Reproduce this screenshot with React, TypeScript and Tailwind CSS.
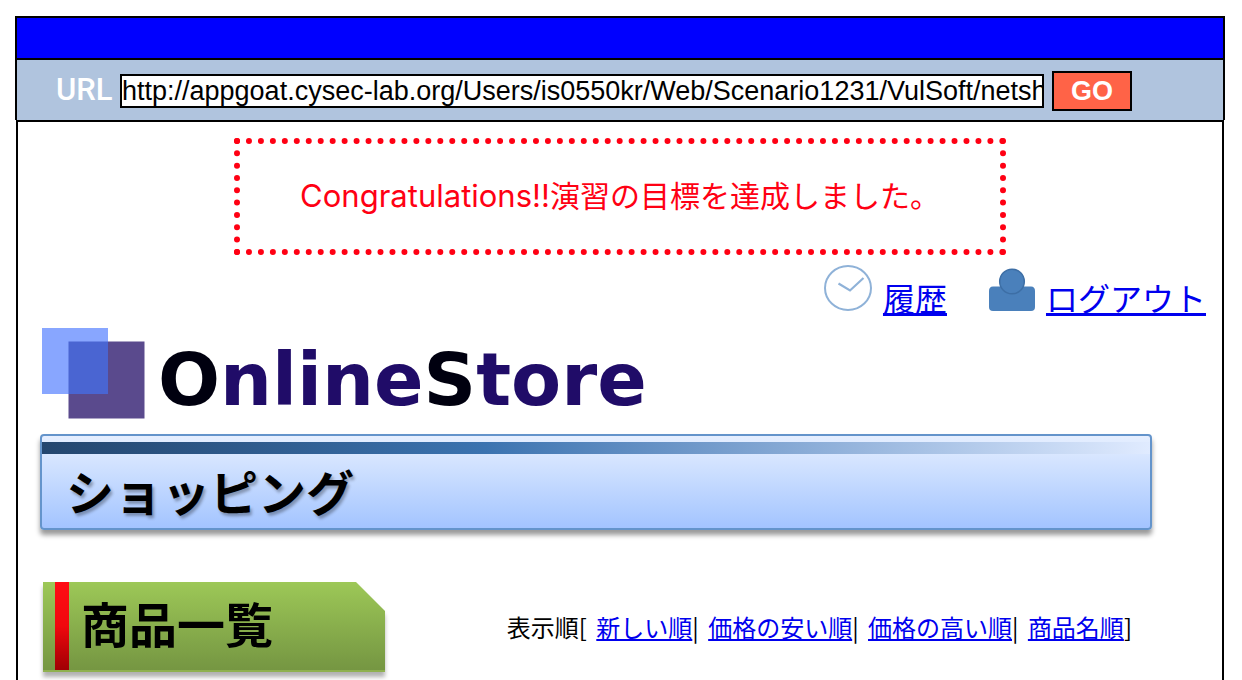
const sortOptions = ["新しい順", "価格の安い順", "価格の高い順", "商品名順"];

function ClockIcon() {
  return (
    <svg viewBox="0 0 48 46" className="h-[46px] w-12" fill="none" aria-hidden="true">
      <ellipse cx="24" cy="23" rx="23" ry="22" stroke="#8fb2d8" strokeWidth="2" />
      <path d="M14.5 18.5 26 25.5 39.5 13" stroke="#8fb2d8" strokeWidth="2.2" />
    </svg>
  );
}

function UserIcon() {
  return (
    <svg viewBox="0 0 46 43" className="h-[43px] w-[46px]" aria-hidden="true">
      <path d="M4 18.500H42Q46 18.500 46 23V39Q46 43 42 43H4Q0 43 0 39V23Q0 18.500 4 18.500Z" fill="#4a80bb" />
      <circle cx="23" cy="13.500" r="12.300" fill="#4a80bb" stroke="#3d6ea5" strokeWidth="1.500" />
    </svg>
  );
}

function LogoMark() {
  return (
    <svg viewBox="0 0 103 91" className="h-[91px] w-[103px]" aria-hidden="true">
      <rect x="26.500" y="13.500" width="76" height="77" fill="#5a4a8d" />
      <rect x="0" y="0" width="66" height="66" fill="#88a6ff" />
      <rect x="26.500" y="13.500" width="39.500" height="52.500" fill="#4a65d2" />
    </svg>
  );
}

function AddressBar() {
  return (
    <header className="border-2 border-b-0 border-black">
      <div className="h-10 bg-[#0000ff]" />
      <form
        className="flex h-[62px] items-center border-t-2 border-black bg-[#b0c4de] pt-0.5 pr-[91px] pl-[39px]"
        onSubmit={(e) => e.preventDefault()}
      >
        <label htmlFor="url" className="w-16 pb-0.5 font-['Roboto',sans-serif] text-[31px] leading-9 font-medium text-white">
          URL
        </label>
        <input
          id="url"
          type="text"
          defaultValue="http://appgoat.cysec-lab.org/Users/is0550kr/Web/Scenario1231/VulSoft/netshop/"
          className="h-[34px] min-w-0 flex-1 border-2 border-black bg-white text-[27px] leading-[30px] outline-none"
        />
        <button type="submit" className="ml-2 h-10 w-20 border-2 border-black bg-[#ff6347] text-[27px] leading-9 font-bold text-white">
          GO
        </button>
      </form>
    </header>
  );
}

export default function App() {
  return (
    <div className="flex min-h-screen flex-col bg-white pt-4 pr-[17px] pl-[15px] font-['Liberation_Sans','Noto_Sans_CJK_JP',sans-serif] text-black">
      <AddressBar />
      <main className="mx-px flex-1 border-2 border-b-0 border-black pt-4 font-['Noto_Sans_CJK_JP',sans-serif]">
        <p className="mx-auto flex h-[117px] w-full max-w-[772px] items-baseline justify-center border-[6px] border-dotted border-[#ff0013] pt-[30px] text-[30px] leading-10 text-[#ff0013]">
          <span className="font-['Inter',sans-serif] text-[31px]">Congratulations!!</span>
          演習の目標を達成しました。
        </p>

        <nav className="flex h-[66px] items-start justify-end gap-[42px] pt-[10px] pr-4 text-[32px] leading-[48px] text-[#0000ee]">
          <span className="flex items-start gap-[11px]">
            <ClockIcon />
            <a href="#history" className="pt-2 underline">履歴</a>
          </span>
          <span className="flex items-start gap-[11px]">
            <span className="pt-[3px]"><UserIcon /></span>
            <a href="#logout" className="pt-2 underline">ログアウト</a>
          </span>
        </nav>

        <div className="pr-[70px] pl-[22px]">
          <div className="ml-0.5 flex h-[113px] items-start gap-[13px] pt-[7px]">
            <LogoMark />
            <span className="pt-[9px] font-['DejaVu_Sans',sans-serif] text-[73px] leading-[85px] font-bold text-[#200c68]">
              <span className="text-[#00000f]">O</span>nline<span className="text-[#00000f]">S</span>tore
            </span>
          </div>

          <h1 className="h-24 rounded-[4px] border-2 border-[#6494cb] bg-linear-to-b from-[#e6efff] to-[#a3c4ff] pt-[6px] shadow-[0_5px_5px_rgba(0,0,0,0.4)]">
            <span className="block h-3 bg-linear-to-r from-[#24466e] via-[#3b73b0] via-40% to-[#e0ebff]" />
            <span className="block pl-6 text-5xl leading-[72px] font-bold [text-shadow:2px_3px_3px_rgba(0,0,0,0.3)]">
              ショッピング
            </span>
          </h1>

          <div className="mt-[52px] flex items-start justify-between pr-5 pl-[3px]">
            <div className="drop-shadow-[0_5px_2px_rgba(0,0,0,0.3)]">
              <h2 className="flex h-[90px] w-[342px] border-b-2 border-[#8fb150] bg-linear-to-b from-[#9dc857] to-[#759642] pl-3 text-5xl leading-20 font-bold [clip-path:polygon(0_0,313px_0,100%_29px,100%_100%,0_100%)]">
                <span className="mr-3 w-[14px] bg-linear-to-b from-[#ff0c14] via-[#f0080e] to-[#a00004]" />
                商品一覧
              </h2>
            </div>
            <p className="pt-[27px] text-2xl leading-9">
              表示順[{" "}
              {sortOptions.map((label, i) => (
                <span key={label} className="ml-1">
                  <a href="#sort" className="text-[#0000ee] underline">{label}</a>
                  {i < sortOptions.length - 1 ? "| " : "]"}
                </span>
              ))}
            </p>
          </div>
        </div>
      </main>
    </div>
  );
}
